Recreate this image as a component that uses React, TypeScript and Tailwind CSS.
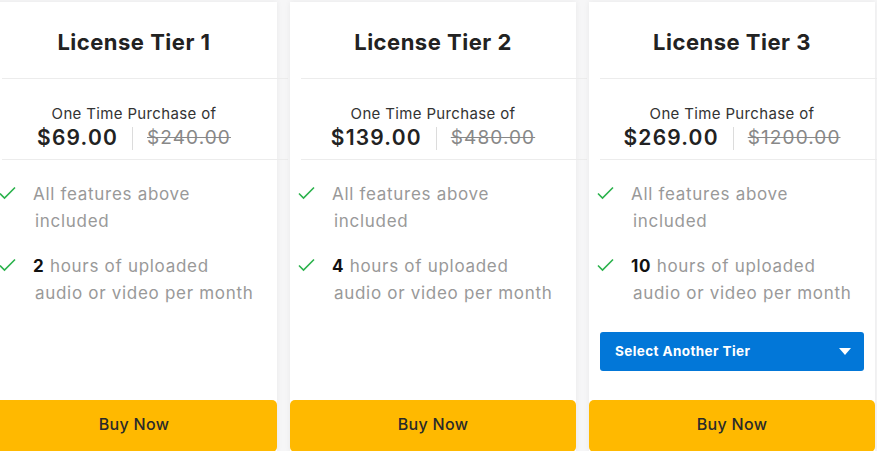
import React from "react";

type Tier = {
  name: string;
  price: string;
  old: string;
  hours: string;
  select?: boolean;
};

const tiers: Tier[] = [
  { name: "License Tier 1", price: "$69.00", old: "$240.00", hours: "2" },
  { name: "License Tier 2", price: "$139.00", old: "$480.00", hours: "4" },
  { name: "License Tier 3", price: "$269.00", old: "$1200.00", hours: "10", select: true },
];

function Check() {
  return (
    <svg width="17" height="14" viewBox="0 0 17 14" className="shrink-0">
      <path d="M1 7.5 L5.5 12 L16 1.5" fill="none" stroke="#2bb24c" strokeWidth="1.6" />
    </svg>
  );
}

function Card({ t }: { t: Tier }) {
  return (
    <div className="w-[286px] h-[450px] shrink-0 bg-white flex flex-col shadow-[0_0_6px_rgba(0,0,0,0.06)]">
      <div className="h-[76px] flex items-center justify-center pt-[4px]">
        <h2 className="text-[22px] font-bold text-[#222] tracking-[0.5px]">{t.name}</h2>
      </div>
      <div className="ml-[11px] w-full border-t border-[#ececec]" />
      <div className="h-[80px] flex flex-col items-center justify-center pt-[19px]">
        <div className="text-[15px] leading-[18px] text-[#333] tracking-[0.35px]">One Time Purchase of</div>
        <div className="flex items-center mt-[1px]">
          <span className="text-[21px] font-semibold text-[#222] leading-[28px] tracking-[1.2px]">{t.price}</span>
          <span className="mx-[14px] w-px h-[23px] bg-[#dcdcdc]" />
          <span className="text-[19px] text-[#888] line-through leading-[28px] tracking-[1.1px]">{t.old}</span>
        </div>
      </div>
      <div className="ml-[11px] w-full border-t border-[#ececec]" />
      <div className="pl-[8px] pr-[0px] pt-[21px] text-[17px] leading-[27px] text-[#999] tracking-[0.7px] whitespace-nowrap">
        <div className="flex">
          <div className="pt-[5px] w-[34px]">
            <Check />
          </div>
          <div>
            All features above
            <br />
            <span className="ml-[2px]">included</span>
          </div>
        </div>
        <div className="flex mt-[18px]">
          <div className="pt-[5px] w-[34px]">
            <Check />
          </div>
          <div>
            <span className="font-bold text-[#111]">{t.hours}</span> hours of uploaded
            <br />
            <span className="ml-[2px]">audio or video per month</span>
          </div>
        </div>
      </div>
      {t.select && (
        <div className="mx-[11px] mt-[25px] h-[39px] rounded-[3px] bg-[#0277d8] flex items-center justify-between pl-[15px] pr-[13px]">
          <span className="text-white text-[13.5px] font-bold tracking-[0.4px]">Select Another Tier</span>
          <svg width="12" height="7" viewBox="0 0 12 7">
            <path d="M0 0 H12 L6 7 Z" fill="#fff" />
          </svg>
        </div>
      )}
      <button className="mt-auto h-[52px] w-full rounded-[5px] bg-[#ffb900] text-[16px] font-medium text-[#2a2a2a] tracking-[0.3px] flex items-center justify-center pb-[4px]">
        Buy Now
      </button>
    </div>
  );
}

export default function App() {
  return (
    <div
      className="w-[877px] h-[451px] overflow-hidden bg-[#f6f6f7]"
      style={{ fontFamily: "Inter, 'Noto Sans', sans-serif" }}
    >
      <div className="flex gap-[13px] ml-[-9px] pt-[2px]">
        {tiers.map((t) => (
          <Card key={t.name} t={t} />
        ))}
      </div>
    </div>
  );
}
